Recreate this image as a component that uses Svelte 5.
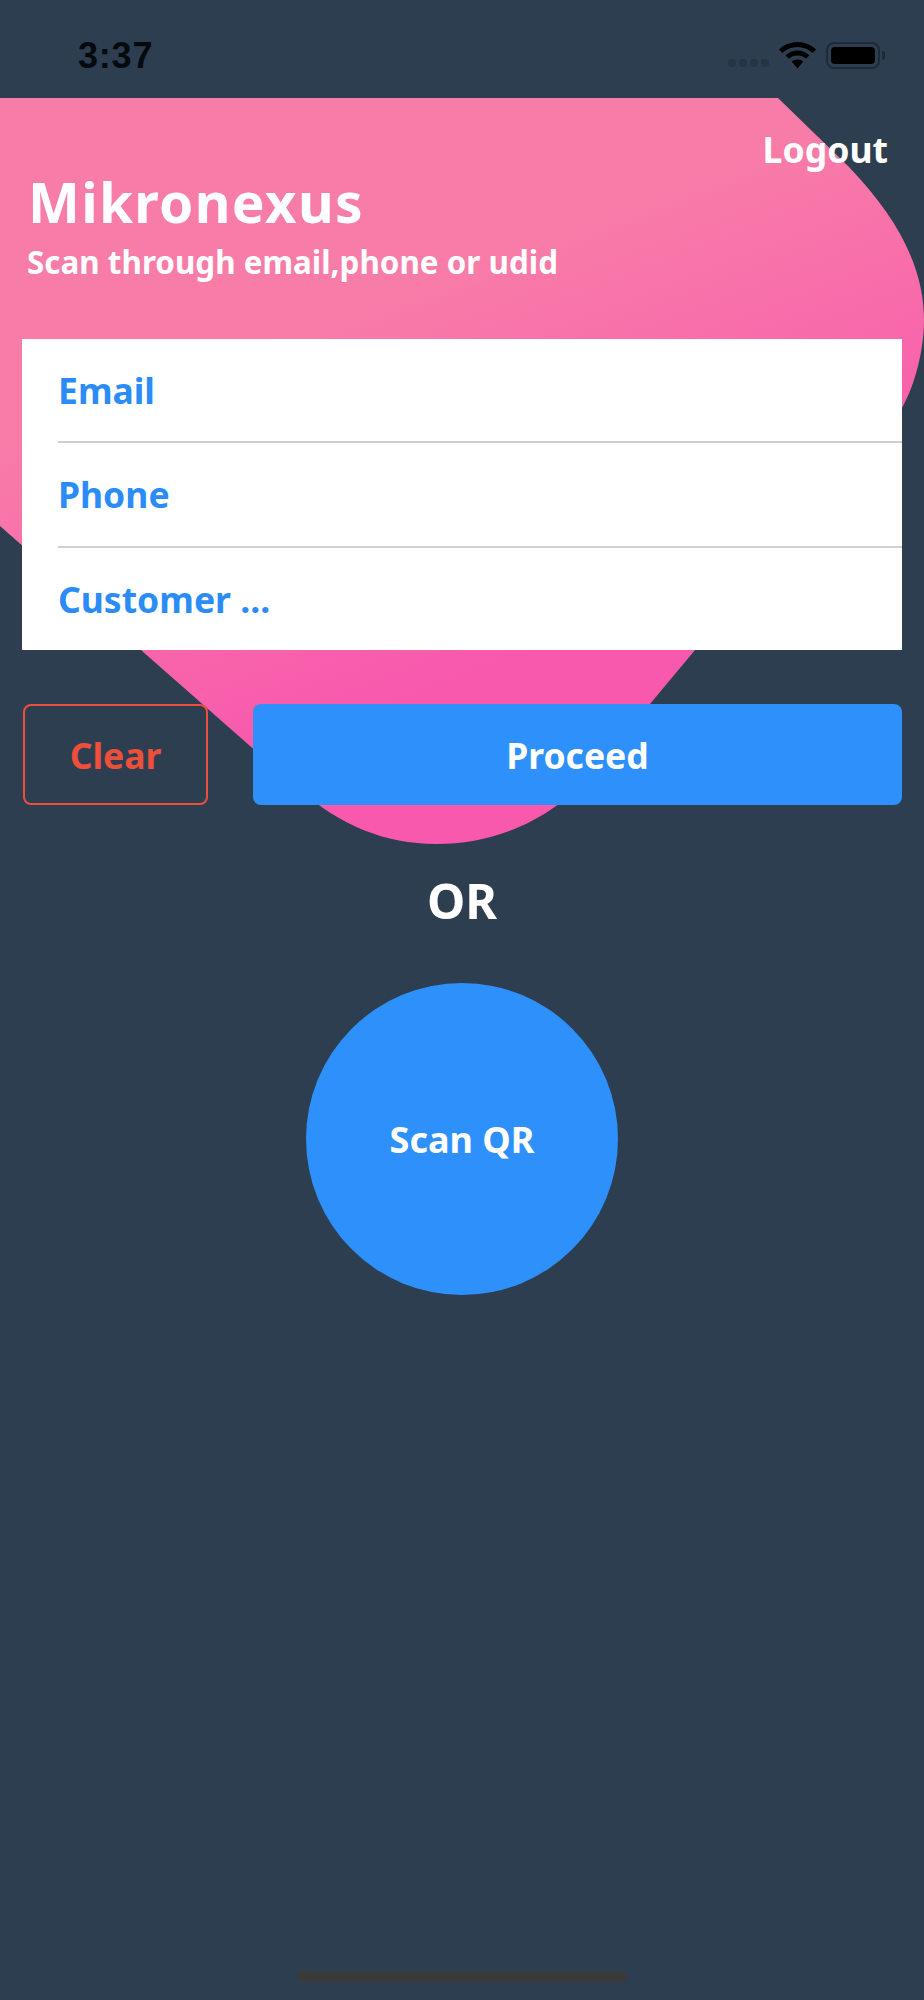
<script>
  const fields = ['Email', 'Phone', 'Customer ...'];
</script>

<div class="screen">
  <svg class="blob" width="924" height="860" viewBox="0 0 924 860" aria-hidden="true">
    <defs>
      <linearGradient id="pink" gradientUnits="userSpaceOnUse" x1="420" y1="280" x2="560" y2="640">
        <stop offset="0" stop-color="#f87ca8" />
        <stop offset="1" stop-color="#f859ad" />
      </linearGradient>
    </defs>
    <path
      d="M0 98 L778 98 L849 167 C900 220 924 270 924 320 C924 350 915 385 902 408 L695 650 L640 716 L592 770 C560 815 500 844 436 844 C385 844 340 825 300 790 L0 526 Z"
      fill="url(#pink)"
    />
  </svg>

  <header class="status">
    <span class="time">3:37</span>
    <div class="indicators">
      <div class="dots"><i></i><i></i><i></i><i></i></div>
      <svg class="wifi" width="37" height="27" viewBox="0 0 37 27" aria-hidden="true">
        <path d="M18.5 0C11.500 0 5.200 2.800 0 7.400l3.400 3.600C7.600 7.300 12.800 5 18.500 5s10.900 2.300 15.100 6L37 7.400C31.800 2.800 25.500 0 18.500 0z" fill="#000" />
        <path d="M18.500 8.600c-4.600 0-8.700 1.700-11.900 4.600l3.400 3.600c2.300-2 5.200-3.200 8.500-3.200s6.200 1.200 8.500 3.200l3.400-3.600c-3.200-2.900-7.300-4.600-11.900-4.600z" fill="#000" />
        <path d="M18.500 17.400c-2.300 0-4.300 0.800-5.800 2.200l5.800 6.800 5.800-6.800c-1.500-1.400-3.500-2.200-5.800-2.200z" fill="#000" />
      </svg>
      <div class="battery"><div class="cell"></div></div>
      <div class="nub"></div>
    </div>
  </header>

  <section class="hero">
    <button class="logout">Logout</button>
    <h1>Mikronexus</h1>
    <p>Scan through email,phone or udid</p>
  </section>

  <div class="card">
    {#each fields as field, i}
      <div class="field" class:last={i === fields.length - 1}>{field}</div>
    {/each}
  </div>

  <div class="actions">
    <button class="clear">Clear</button>
    <button class="proceed">Proceed</button>
  </div>

  <div class="or">OR</div>

  <button class="scan">Scan QR</button>

  <div class="home"></div>
</div>

<style>
  :global(body) {
    margin: 0;
    background: #2d3e50;
  }
  .screen {
    position: relative;
    width: 924px;
    height: 2000px;
    overflow: hidden;
    background: #2d3e50;
    font-family: 'Noto Sans', 'Open Sans', sans-serif;
    color: #fff;
  }
  .screen > * {
    position: relative;
  }
  .screen > .blob {
    position: absolute;
    left: 0;
    top: 0;
  }
  button {
    font-family: inherit;
    border: 0;
    padding: 0;
    background: none;
    color: inherit;
  }
  .status {
    display: flex;
    justify-content: space-between;
    align-items: flex-start;
    height: 98px;
    box-sizing: border-box;
    padding: 0 38px 0 78px;
  }
  .time {
    margin-top: 36px;
    font-family: 'Liberation Sans', sans-serif;
    font-size: 36px;
    font-weight: 700;
    line-height: 40px;
    color: #050a0f;
    letter-spacing: 0.8px;
  }
  .indicators {
    display: flex;
    align-items: flex-start;
    margin-top: 42px;
    margin-right: 1px;
  }
  .dots {
    display: flex;
    gap: 3px;
    margin-top: 17px;
    margin-right: 10px;
  }
  .dots i {
    display: block;
    width: 8px;
    height: 8px;
    border-radius: 50%;
    background: #263545;
  }
  .battery {
    box-sizing: border-box;
    width: 54px;
    height: 27px;
    margin-left: 10px;
    padding: 3px;
    border: 2px solid #1e2a38;
    border-radius: 8px;
  }
  .cell {
    height: 100%;
    background: #000;
    border-radius: 4px;
  }
  .nub {
    width: 3px;
    height: 9px;
    margin: 9px 0 0 2px;
    background: #1e2a38;
    border-radius: 0 4px 4px 0;
  }
  .hero {
    display: flex;
    flex-direction: column;
    height: 241px;
    box-sizing: border-box;
    padding: 31px 36px 0 28px;
  }
  .logout {
    align-self: flex-end;
    font-size: 35.600px;
    font-weight: 700;
    line-height: 40px;
  }
  h1 {
    margin: 0;
    font-size: 55px;
    font-weight: 700;
    line-height: 66px;
    letter-spacing: 1.300px;
  }
  p {
    margin: 6px 0 0 -1px;
    font-size: 31.400px;
    font-weight: 700;
    line-height: 42px;
  }
  .card {
    width: 880px;
    height: 311px;
    margin-left: 22px;
    box-sizing: border-box;
    padding-left: 36px;
    background: #fff;
    display: flex;
    flex-direction: column;
  }
  .field {
    flex: 1;
    display: flex;
    align-items: center;
    font-size: 35.500px;
    font-weight: 700;
    color: #2b8cf7;
    border-bottom: 2px solid #d0d0d0;
  }
  .field.last {
    border-bottom: 0;
  }
  .actions {
    display: flex;
    gap: 45px;
    height: 101px;
    margin: 54px 22px 0 23px;
    font-size: 35.500px;
    font-weight: 700;
  }
  .actions button {
    font-size: inherit;
    font-weight: inherit;
    border-radius: 8px;
  }
  .clear {
    width: 185px;
    box-sizing: border-box;
    border: 2px solid #ee4f3a;
    color: #ee4f3a;
  }
  .actions .proceed {
    flex: 1;
    background: #2e90fa;
    color: #fff;
  }
  .or {
    margin-top: 62px;
    text-align: center;
    font-size: 48.500px;
    font-weight: 700;
    line-height: 66px;
  }
  .scan {
    display: block;
    width: 312px;
    height: 312px;
    margin: 50px 0 0 306px;
    border-radius: 50%;
    background: #2e90fa;
    font-size: 36px;
    font-weight: 700;
  }
  .screen > .home {
    position: absolute;
    left: 297px;
    top: 1971px;
    width: 330px;
    height: 11px;
    border-radius: 6px;
    background: #3a3a3a;
  }
</style>
